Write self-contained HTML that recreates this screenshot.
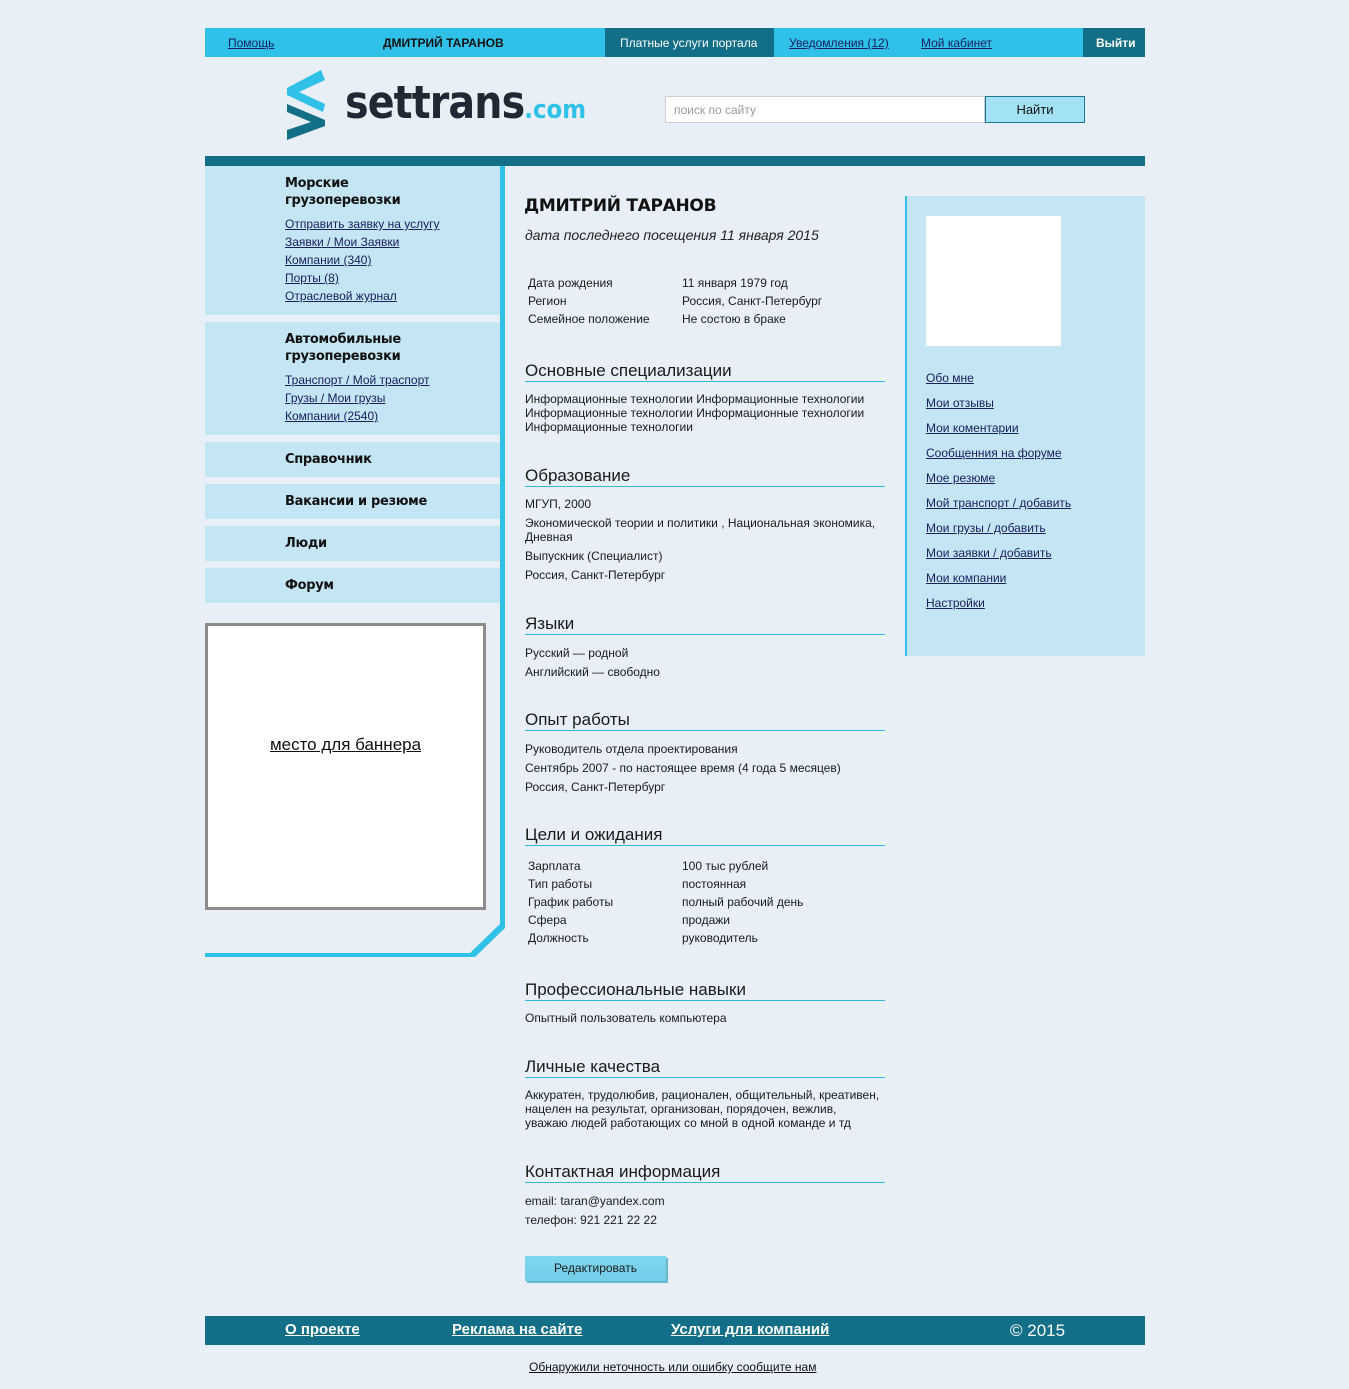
<!DOCTYPE html>
<html><head><meta charset="utf-8"><style>
*{margin:0;padding:0;box-sizing:border-box}
body{width:1349px;height:1389px;background:#e8eff6;font-family:"Liberation Sans",Arial,sans-serif;color:#1a1a1a;position:relative;overflow:hidden}
.a{position:absolute}
a{color:#1a2060;text-decoration:underline}
.n{font-family:"Liberation Sans Narrow","Liberation Sans",sans-serif}
.top{left:205px;top:28px;width:940px;height:29px;background:#2fc1e7;font-size:12px}
.top span,.top a{position:absolute;top:8px}
.lp{background:#c4e5f3;left:205px;width:295px}
.lp h3{font-family:"DejaVu Sans",Verdana,sans-serif;font-size:13px;font-weight:bold;color:#111;line-height:17px;letter-spacing:-0.3px}
.lp a{display:block;font-size:12px;line-height:18px}
.h{position:absolute;left:525px;width:360px;font-size:17px;color:#1a1a1a;border-bottom:1px solid #2fb8e0;line-height:20px}
.t{position:absolute;left:525px;font-size:12px;line-height:14px;color:#1a1a1a}
.rl a{position:absolute;left:926px;font-size:12px}
</style></head><body>
<div class="a top n">
<a style="left:23px">Помощь</a>
<span style="left:178px;color:#111;font-weight:bold;font-family:'Liberation Sans';font-size:12px">ДМИТРИЙ ТАРАНОВ</span>
<div class="a" style="left:400px;top:0;width:169px;height:29px;background:#136e87"></div>
<span style="left:415px;color:#fff">Платные услуги портала</span>
<a style="left:584px">Уведомления (12)</a>
<a style="left:716px">Мой кабинет</a>
<div class="a" style="left:878px;top:0;width:62px;height:29px;background:#136e87"></div>
<span style="left:891px;color:#fff;font-weight:bold">Выйти</span>
</div>
<svg class="a" style="left:285px;top:68px" width="45" height="75">
<polygon points="36,2 40,12 14,24 40,36 38,44 2,27 2,20" fill="#2fc1e7"/>
<polygon points="2,36 40,52 40,58 2,72 2,62 26,54 2,44" fill="#136e87"/>
</svg>
<div class="a" style="left:345px;top:76px;font-size:45px;font-weight:bold;color:#202833;letter-spacing:-1px;font-family:'DejaVu Sans',sans-serif;transform:scaleX(0.88);transform-origin:left">settrans<span style="font-size:26px;color:#2fc1e7;font-weight:bold;letter-spacing:0">.com</span></div>
<div class="a n" style="left:665px;top:96px;width:320px;height:27px;background:#fff;border:1px solid #ccc;font-size:12px;color:#999;padding:6px 8px">поиск по сайту</div>
<div class="a n" style="left:985px;top:96px;width:100px;height:27px;background:#a3e2f5;border:1px solid #1a7a95;font-size:13px;text-align:center;line-height:25px;color:#111">Найти</div>
<div class="a" style="left:205px;top:156px;width:940px;height:10px;background:#136e87"></div>
<div class="a" style="left:500px;top:166px;width:5px;height:762px;background:#2fc1e7"></div>
<svg class="a" style="left:470px;top:924px" width="36" height="36"><polygon points="30,0 35,0 35,4 5,33 0,33 0,29 30,0" fill="#2fc1e7"/></svg>
<div class="a" style="left:205px;top:953px;width:270px;height:4px;background:#2fc1e7"></div>
<div class="a lp" style="top:166px;height:149px;padding:9px 0 0 80px"><h3>Морские<br>грузоперевозки</h3><div style="height:6px"></div>
<a>Отправить заявку на услугу</a><a>Заявки / Мои Заявки</a><a>Компании (340)</a><a>Порты (8)</a><a>Отраслевой журнал</a></div>
<div class="a lp" style="top:322px;height:113px;padding:9px 0 0 80px"><h3>Автомобильные<br>грузоперевозки</h3><div style="height:6px"></div>
<a>Транспорт / Мой траспорт</a><a>Грузы / Мои грузы</a><a>Компании (2540)</a></div>
<div class="a lp" style="top:442px;height:35px;padding:9px 0 0 80px"><h3>Справочник</h3></div>
<div class="a lp" style="top:484px;height:35px;padding:9px 0 0 80px"><h3>Вакансии и резюме</h3></div>
<div class="a lp" style="top:526px;height:35px;padding:9px 0 0 80px"><h3>Люди</h3></div>
<div class="a lp" style="top:568px;height:35px;padding:9px 0 0 80px"><h3>Форум</h3></div>
<div class="a" style="left:205px;top:623px;width:281px;height:287px;background:#fff;border:3px solid #8f8b8b;text-align:center;padding-top:109px;font-size:17px"><a style="color:#111">место для баннера</a></div>

<div class="a" style="left:524px;top:196px;font-size:17px;font-weight:bold;font-family:'DejaVu Sans',sans-serif;color:#111;letter-spacing:-0.3px">ДМИТРИЙ ТАРАНОВ</div>
<div class="a" style="left:525px;top:227px;font-size:14px;font-style:italic;color:#222">дата последнего посещения 11 января 2015</div>
<div class="t" style="left:528px;top:274px;line-height:18px">Дата рождения<br>Регион<br>Семейное положение</div>
<div class="t" style="left:682px;top:274px;line-height:18px">11 января 1979 год<br>Россия, Санкт-Петербург<br>Не состою в браке</div>
<div class="h" style="top:361px">Основные специализации</div>
<div class="t" style="top:392px">Информационные технологии Информационные технологии<br>Информационные технологии Информационные технологии<br>Информационные технологии</div>
<div class="h" style="top:466px">Образование</div>
<div class="t" style="top:497px">МГУП, 2000</div>
<div class="t" style="top:516px">Экономической теории и политики , Национальная экономика,<br>Дневная</div>
<div class="t" style="top:549px">Выпускник (Специалист)</div>
<div class="t" style="top:568px">Россия, Санкт-Петербург</div>
<div class="h" style="top:614px">Языки</div>
<div class="t" style="top:644px;line-height:19px">Русский — родной<br>Английский — свободно</div>
<div class="h" style="top:710px">Опыт работы</div>
<div class="t" style="top:740px;line-height:19px">Руководитель отдела проектирования<br>Сентябрь 2007 - по настоящее время (4 года 5 месяцев)<br>Россия, Санкт-Петербург</div>
<div class="h" style="top:825px">Цели и ожидания</div>
<div class="t" style="left:528px;top:857px;line-height:18px">Зарплата<br>Тип работы<br>График работы<br>Сфера<br>Должность</div>
<div class="t" style="left:682px;top:857px;line-height:18px">100 тыс рублей<br>постоянная<br>полный рабочий день<br>продажи<br>руководитель</div>
<div class="h" style="top:980px">Профессиональные навыки</div>
<div class="t" style="top:1011px">Опытный пользователь компьютера</div>
<div class="h" style="top:1057px">Личные качества</div>
<div class="t" style="top:1088px">Аккуратен, трудолюбив, рационален, общительный, креативен,<br>нацелен на результат, организован, порядочен, вежлив,<br>уважаю людей работающих со мной в одной команде и тд</div>
<div class="h" style="top:1162px">Контактная информация</div>
<div class="t" style="top:1192px;line-height:19px">email: taran@yandex.com<br>телефон: 921 221 22 22</div>
<div class="a n" style="left:525px;top:1256px;width:141px;height:25px;background:linear-gradient(#7fd6ef,#72cde8);box-shadow:2px 2px 0 #6ab8cf;font-size:12px;text-align:center;line-height:24px">Редактировать</div>

<div class="a" style="left:905px;top:196px;width:240px;height:460px;background:#c4e5f3;border-left:2px solid #2fc1e7"></div>
<div class="a" style="left:926px;top:216px;width:135px;height:130px;background:#fff"></div>
<div class="rl">
<a style="top:371px">Обо мне</a><a style="top:396px">Мои отзывы</a><a style="top:421px">Мои коментарии</a><a style="top:446px">Сообщенния на форуме</a><a style="top:471px">Мое резюме</a><a style="top:496px">Мой транспорт / добавить</a><a style="top:521px">Мои грузы / добавить</a><a style="top:546px">Мои заявки / добавить</a><a style="top:571px">Мои компании</a><a style="top:596px">Настройки</a>
</div>

<div class="a n" style="left:205px;top:1316px;width:940px;height:29px;background:#136e87;font-size:15px;font-weight:bold">
<a class="a" style="left:80px;top:5px;color:#fff">О проекте</a>
<a class="a" style="left:247px;top:5px;color:#fff">Реклама на сайте</a>
<a class="a" style="left:466px;top:5px;color:#fff">Услуги для компаний</a>
<span class="a" style="left:805px;top:5px;color:#fff;font-weight:normal;font-size:17px">© 2015</span>
</div>
<a class="a n" style="left:529px;top:1360px;font-size:12px;color:#111">Обнаружили неточность или ошибку сообщите нам</a>
</body></html>
